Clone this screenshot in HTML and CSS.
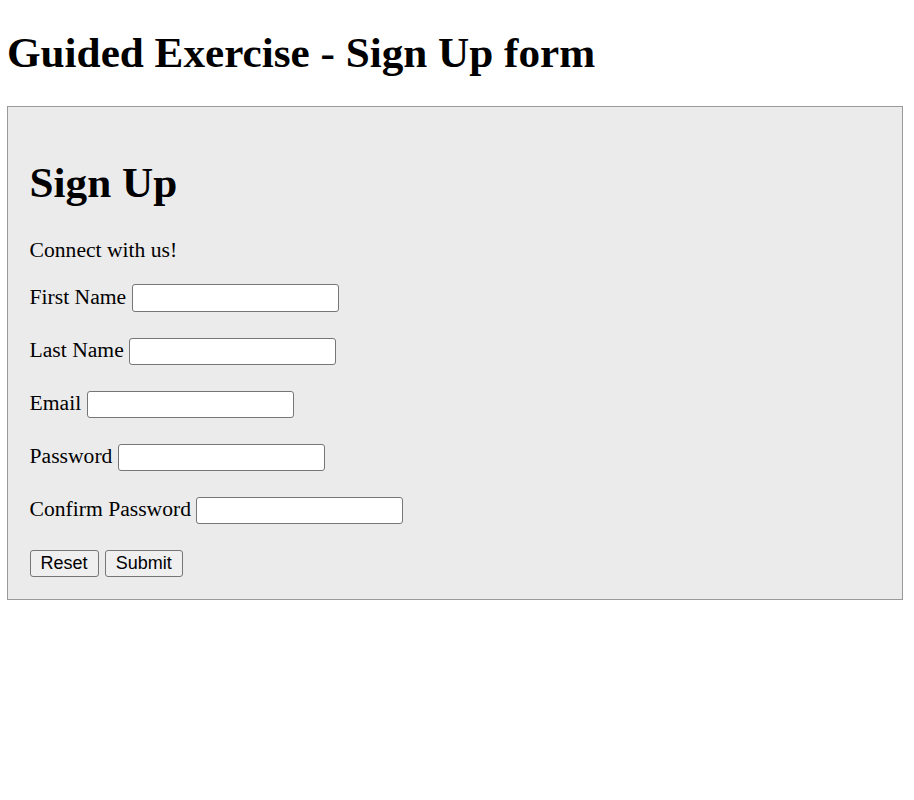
FILE: index.html
```html
<!DOCTYPE html>
<html lang="en">
<head>
<meta charset="utf-8">
<title>Guided Exercise - Sign Up form</title>
<link rel="stylesheet" href="styles.css">
</head>
<body>
<h1 class="page-title">Guided Exercise - Sign Up form</h1>
<form class="card">
  <h2 class="card-title">Sign Up</h2>
  <p class="lead">Connect with us!</p>
  <div class="field"><label for="fn">First Name</label><input id="fn" type="text"></div>
  <div class="field"><label for="ln">Last Name</label><input id="ln" type="text"></div>
  <div class="field"><label for="em">Email</label><input id="em" type="email"></div>
  <div class="field"><label for="pw">Password</label><input id="pw" type="password"></div>
  <div class="field"><label for="cpw">Confirm Password</label><input id="cpw" type="password"></div>
  <div class="actions">
    <button type="reset" class="btn">Reset</button>
    <button type="submit" class="btn">Submit</button>
  </div>
</form>
</body>
</html>
```

FILE: styles.css
```css
html, body {
  background: #fff;
}
body {
  margin: 0;
  padding: 0 11px 0 7px;
  font-family: "Liberation Serif", "Times New Roman", serif;
  font-size: 21.6px;
  color: #000;
}
.page-title {
  font-size: 43.2px;
  font-weight: bold;
  margin: 28px 0 29px;
}
.card {
  background: #ebebeb;
  border: 1.5px solid #999;
  padding: 21.6px;
}
.card-title {
  font-size: 43.2px;
  font-weight: bold;
  margin: 29.3px 0 31px;
}
.lead {
  margin: 0 0 21.6px;
}
.field {
  display: flex;
  align-items: baseline;
  gap: 5.4px;
  margin-bottom: 25.6px;
}
.field input {
  box-sizing: border-box;
  width: 207px;
  height: 27.5px;
  padding: 1px 3px;
  border: 1.35px solid #767676;
  border-radius: 3px;
  background: #fff;
  font: 18px "Liberation Sans", Arial, sans-serif;
  color: #000;
}
.actions {
  display: flex;
  gap: 6px;
}
.btn {
  box-sizing: border-box;
  height: 27.5px;
  padding: 0 10px;
  border: 1.35px solid #767676;
  border-radius: 3px;
  background: #efefef;
  color: #000;
  font: 18px "Liberation Sans", Arial, sans-serif;
}
```
